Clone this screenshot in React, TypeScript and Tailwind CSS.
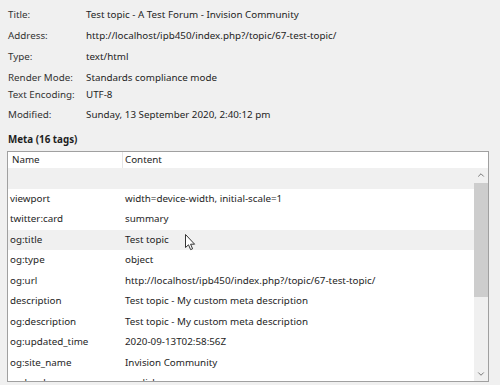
import { ChevronUp, ChevronDown } from "lucide-react";

const info = [
  { label: "Title:", value: "Test topic - A Test Forum - Invision Community", h: "h-[24px]" },
  { label: "Address:", value: "http://localhost/ipb450/index.php?/topic/67-test-topic/", h: "h-[18px]" },
  { label: "Type:", value: "text/html", h: "h-[24px]" },
  { label: "Render Mode:", value: "Standards compliance mode", h: "h-[17px]" },
  { label: "Text Encoding:", value: "UTF-8", h: "h-[17px]" },
  { label: "Modified:", value: "Sunday, 13 September 2020, 2:40:12 pm", h: "h-[24px]" },
];

const meta = [
  { name: "", content: "", hover: true },
  { name: "viewport", content: "width=device-width, initial-scale=1" },
  { name: "twitter:card", content: "summary" },
  { name: "og:title", content: "Test topic", hover: true },
  { name: "og:type", content: "object" },
  { name: "og:url", content: "http://localhost/ipb450/index.php?/topic/67-test-topic/" },
  { name: "description", content: "Test topic - My custom meta description" },
  { name: "og:description", content: "Test topic - My custom meta description" },
  { name: "og:updated_time", content: "2020-09-13T02:58:56Z" },
  { name: "og:site_name", content: "Invision Community" },
  { name: "og:locale", content: "english" },
];

function Cursor() {
  return (
    <svg width="12" height="18" viewBox="0 0 12 18" className="absolute left-[185px] top-[234px]">
      <path
        d="M0.5 0.5 L0.5 13.5 L3.5 10.8 L5.6 15.6 L7.6 14.8 L5.6 10.2 L9.6 10.2 Z"
        fill="#ffffff"
        stroke="#333333"
        strokeWidth="1"
        strokeLinejoin="round"
      />
    </svg>
  );
}

export default function App() {
  return (
    <div className="relative w-[500px] h-[385px] overflow-hidden bg-[#f0f0f0] text-[9.8px] leading-none text-[#1e1e1e] font-['Noto_Sans',sans-serif]">
      {/* Page properties */}
      <div className="pt-[3px] px-[8px]">
        {info.map((r) => (
          <div key={r.label} className={`flex items-center whitespace-nowrap ${r.h}`}>
            <div className="w-[78px] text-[#333]">{r.label}</div>
            <div>{r.value}</div>
          </div>
        ))}
      </div>

      <div className="px-[8px] mt-[3px] h-[20px] flex items-center font-bold">Meta (16 tags)</div>

      {/* Meta list */}
      <div className="relative mx-[7px] mt-[1px] w-[482px] h-[231px] border border-[#a0a0a0] bg-white overflow-hidden">
        <div className="flex h-[16px] items-center bg-white">
          <div className="w-[114px] pl-[4px]">Name</div>
          <div className="h-full w-px bg-[#e5e5e5]" />
          <div className="pl-[2px]">Content</div>
        </div>
        <div className="flex">
          <div className="flex-1">
            {meta.map((m, i) => (
              <div
                key={i}
                className={`flex items-center h-[20.5px] whitespace-nowrap ${m.hover ? "bg-[#f0f0f0]" : "bg-white"}`}
              >
                <div className="w-[115px] pl-[2px]">{m.name}</div>
                <div className="pl-[2px]">{m.content}</div>
              </div>
            ))}
          </div>
          <div className="w-[14px] h-[213px] bg-[#f0f0f0] flex flex-col items-center">
            <div className="h-[14px] flex items-center justify-center">
              <ChevronUp size={10} strokeWidth={2} className="text-[#606060]" />
            </div>
            <div className="mt-[1px] w-[14px] h-[114px] bg-[#cdcdcd]" />
            <div className="flex-1" />
            <div className="h-[14px] flex items-center justify-center">
              <ChevronDown size={10} strokeWidth={2} className="text-[#606060]" />
            </div>
          </div>
        </div>
      </div>

      <Cursor />
    </div>
  );
}
